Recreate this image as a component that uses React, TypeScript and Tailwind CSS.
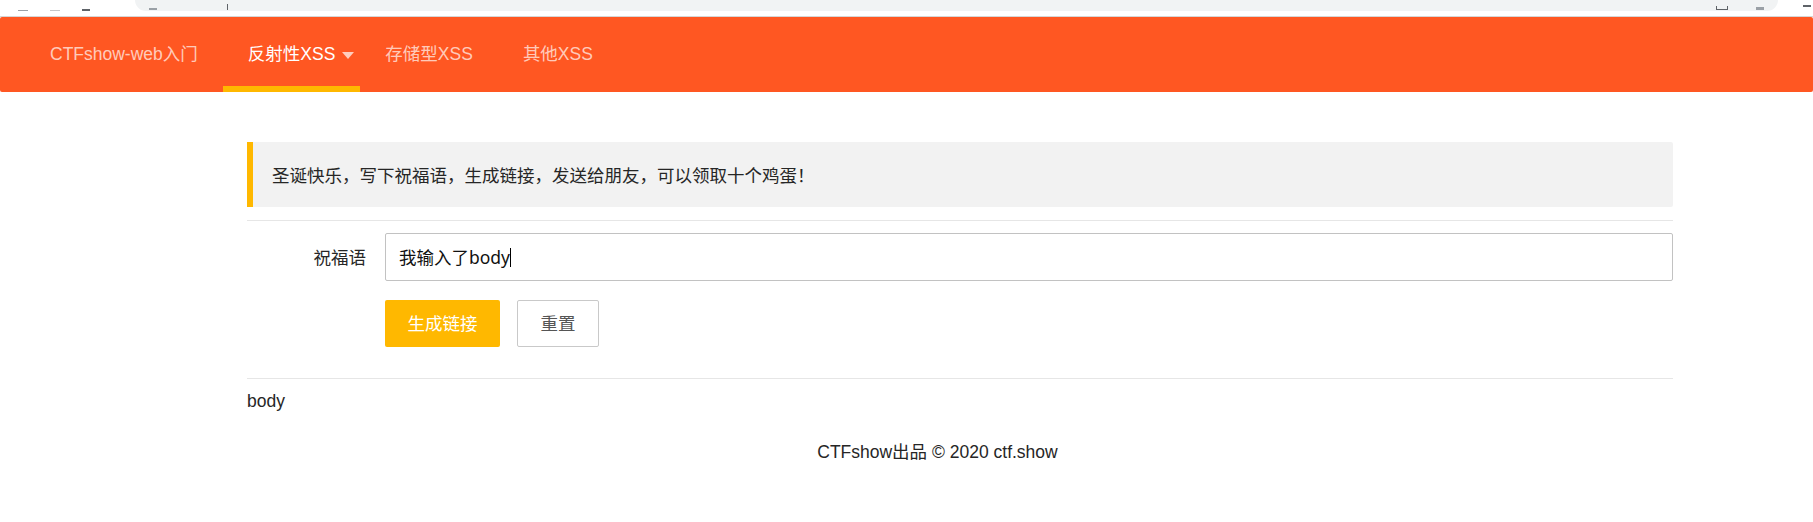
const latin = "font-['Liberation_Sans','Noto_Sans_CJK_SC',sans-serif]";
const cjk = "font-['Noto_Sans','Noto_Sans_CJK_SC',sans-serif]";

interface NavItemProps {
  label: string;
  active?: boolean;
  more?: boolean;
}

function NavItem({ label, active, more }: NavItemProps) {
  return (
    <div
      className={`relative h-full flex items-center pl-[25px] ${
        more ? "pr-[6px]" : "pr-[25px]"
      } ${active ? "text-white" : "text-white/70"}`}
    >
      <span className="leading-none">{label}</span>
      {more && (
        <span className="ml-[7px] mt-[2px] w-0 h-0 border-x-[6px] border-t-[7px] border-x-transparent border-t-white/70" />
      )}
      {active && <span className="absolute left-0 right-0 bottom-0 h-[6px] bg-[#FFB800]" />}
    </div>
  );
}

export default function App() {
  return (
    <div className={`w-[1813px] h-[522px] bg-white overflow-hidden ${latin} text-[#262626]`}>
      {/* browser chrome sliver */}
      <div className="h-[17px] flex items-start border-b border-[#d6d6d6]">
        <div className="w-[135px] h-[11px] flex items-end gap-[22px] pl-[18px]">
          <span className="w-[10px] h-[1px] bg-[#9aa0a6]" />
          <span className="w-[10px] h-[1px] bg-[#c4c7ca]" />
          <span className="w-[8px] h-[2px] bg-[#5f6368]" />
        </div>
        <div className="w-[1643px] h-[11px] bg-[#f1f3f4] rounded-b-[11px] flex items-end px-[14px]">
          <span className="w-[8px] h-[2px] bg-[#9aa0a6] mb-[1px]" />
          <span className="w-[1px] h-[6px] bg-[#5f6368] ml-[70px] mb-[1px]" />
          <span className="ml-auto w-[12px] h-[4px] border-x border-b border-[#5f6368] mb-[1px]" />
          <span className="ml-[28px] w-[8px] h-[3px] bg-[#9aa0a6] mb-[1px]" />
        </div>
        <div className="flex-1 flex justify-end pr-[2px]">
          <span className="w-[8px] h-[2px] bg-[#5f6368] mt-[5px]" />
        </div>
      </div>

      {/* header nav */}
      <nav className="h-[75px] bg-[#FF5722] rounded-[2px] flex items-stretch px-[25px] text-[17.5px]">
        <NavItem label="CTFshow-web入门" />
        <NavItem label="反射性XSS" active more />
        <NavItem label="存储型XSS" />
        <NavItem label="其他XSS" />
      </nav>

      <main className="ml-[247px] w-[1426px] flex flex-col">
        <div
          className={`mt-[50px] h-[65px] flex items-center pl-[19px] bg-[#f2f2f2] border-l-[6px] border-[#FFB800] rounded-r-[2px] text-[17.5px] leading-[22px] ${cjk}`}
        >
          圣诞快乐，写下祝福语，生成链接，发送给朋友，可以领取十个鸡蛋！
        </div>

        <div className="mt-[13px] h-px bg-[#e6e6e6]" />

        <div className="mt-[12px] flex items-center">
          <label className={`w-[138px] shrink-0 pr-[19px] text-right text-[17.5px] ${cjk}`}>祝福语</label>
          <div
            className={`flex-1 h-[48px] flex items-center pl-[13px] border border-[#c2c2c2] rounded-[2px] text-[17.5px] text-[#111] ${cjk}`}
          >
            <span>我输入了body</span>
            <span className="w-px h-[19px] bg-black" />
          </div>
        </div>

        <div className={`mt-[19px] ml-[138px] flex gap-[17px] text-[17.5px] ${cjk}`}>
          <button className="h-[47px] px-[22.5px] bg-[#FFB800] text-white rounded-[2px]">生成链接</button>
          <button className="h-[47px] px-[22.5px] bg-white text-[#555] border border-[#c9c9c9] rounded-[2px]">
            重置
          </button>
        </div>

        <div className="mt-[31px] h-px bg-[#e6e6e6]" />

        <div className="mt-[11px] text-[17.5px] leading-[22px]">body</div>
      </main>

      <footer className="mt-[29px] pl-[62px] text-center text-[17.5px] leading-[22px]">
        CTFshow出品 © 2020 ctf.show
      </footer>
    </div>
  );
}
